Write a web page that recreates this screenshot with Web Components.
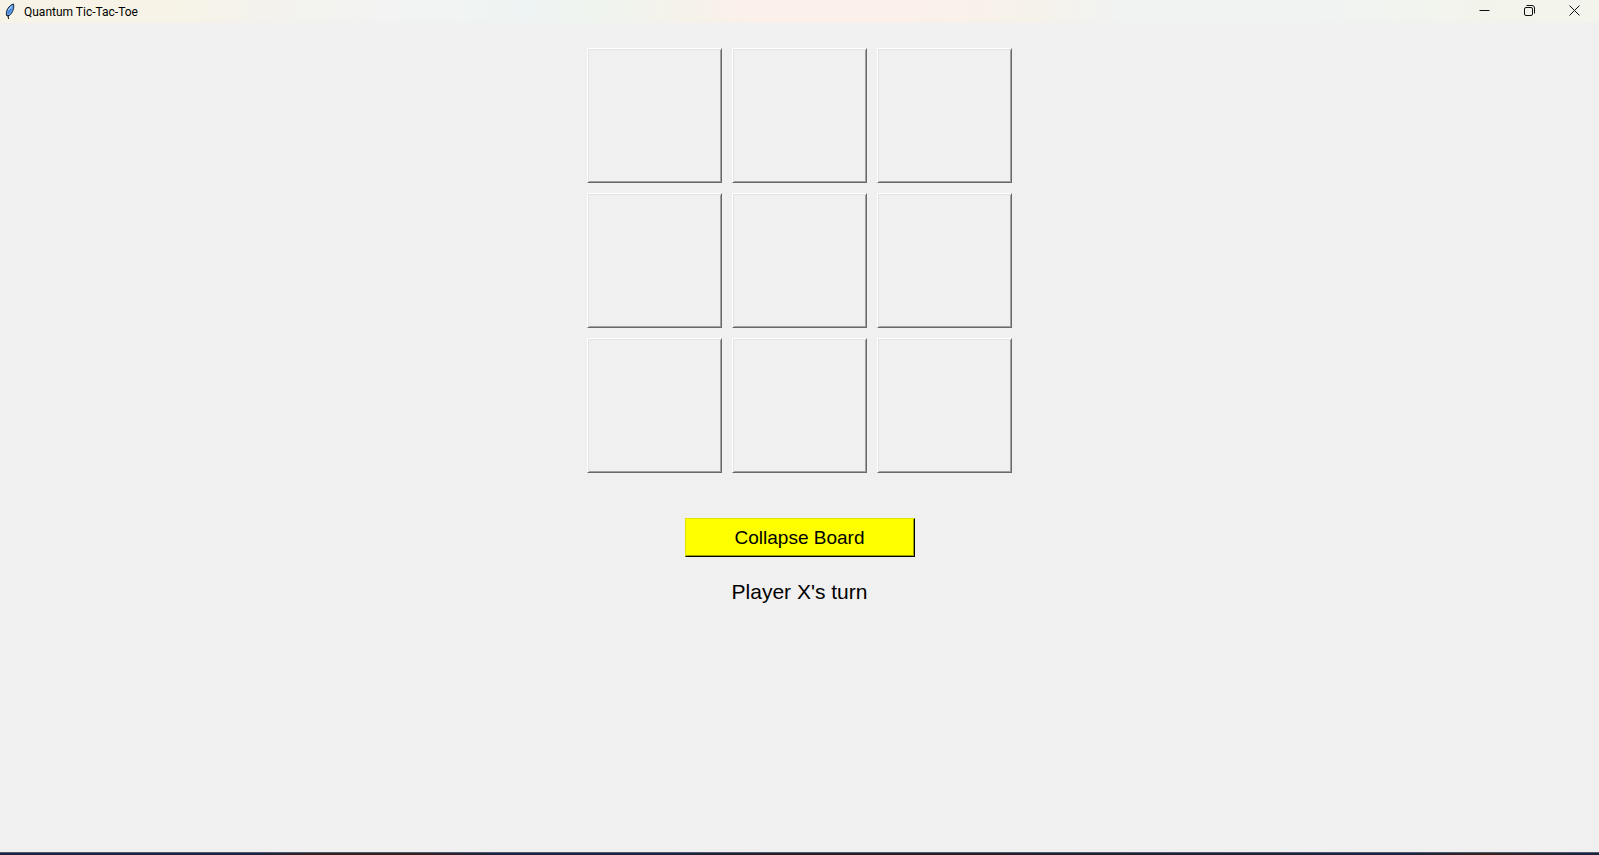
<!DOCTYPE html>
<html lang="en">
<head>
<meta charset="utf-8">
<title>Quantum Tic-Tac-Toe</title>
<style>
html, body { height: 100%; margin: 0; }
body { background: #f0f0f0; color: #000; font-family: "Liberation Sans", Arial, sans-serif; }
</style>
</head>
<body>
<app-window></app-window>
<template id="title-bar">
<style>
:host { display: flex; align-items: center; height: 23px; padding: 0 2px 0 5px;
  background: linear-gradient(90deg, #f7f3e6 0, #f7f3e6 10%, #f3f2ed 17%, #f2f3f2 24%, #eef4f3 33%, #eff4ef 37%, #f5f2ea 43%, #fbf0ea 47%, #fbf0ea 57%, #f5f2ea 65%, #f1f3f2 70%, #f0f3f2 82%, #f2f4ec 92%, #f3f4ec 100%); }
h1 { flex: 1; margin: 0 0 0 9px; font: 400 12px/22px Roboto, "Noto Sans", sans-serif; }
.window-buttons { display: flex; align-self: stretch; }
button { display: flex; width: 45px; height: 21px; padding: 0; border: 0; background: none; align-items: center; justify-content: center; }
svg { display: block; fill: none; stroke: #111; }
</style>
<svg width="10" height="17" viewBox="0 0 10 17" aria-hidden="true">
  <path d="M1.500 12C.5 8 4 2 8.500 1C9.500 5 7.500 10 4.500 12.500L2 13Z" fill="#5ca0ef" stroke="#18202c"/>
  <path d="M3 12L3.500 16" stroke="#111"/><path d="M3 10.500L6 6" stroke="#2b5a9c" stroke-width=".7"/><path d="M3.500 7L6.500 3.500" stroke="#b8dcff"/>
</svg>
<h1><slot></slot></h1>
<div class="window-buttons">
  <button type="button" aria-label="Minimize"><svg width="11" height="11"><path d="M.5 5.500h10"/></svg></button>
  <button type="button" aria-label="Restore"><svg width="11" height="11"><rect x=".5" y="2.500" width="8" height="8" rx="1.500"/><path d="M2.500 .5h5.500a2.500 2.500 0 0 1 2.500 2.500v5.500"/></svg></button>
  <button type="button" aria-label="Close"><svg width="11" height="11"><path d="M.5 .5l10 10M10.500 .5l-10 10"/></svg></button>
</div>
</template>
<template id="game-board">
<style>
:host { display: grid; grid-template-columns: repeat(3, 135px); gap: 10px; }
button { height: 135px; padding: 0; border: 1px solid; border-color: #fff #696969 #696969 #fff; border-radius: 0; background: #f0f0f0; box-shadow: inset 1px 1px #e3e3e3, inset -1px -1px #a0a0a0; }
</style>
</template>
<template id="collapse-button">
<style>
:host { display: block; }
button { display: block; width: 230px; height: 39px; padding: 0; border: 1px solid; border-color: #e3e300 #000 #000 #e3e300; border-radius: 0; background: #ff0; color: #000; font: 19px/36px "Liberation Sans", Arial, sans-serif; box-shadow: inset -1px -1px #a0a000; }
</style>
<button type="button"><slot></slot></button>
</template>
<template id="game-status">
<style>
:host { display: block; }
p { margin: 0; font-size: 21px; line-height: 30px; }
</style>
<p role="status"><slot></slot></p>
</template>
<template id="app-window">
<style>
:host { display: flex; flex-direction: column; min-height: 100vh; }
main { flex: 1; display: flex; flex-direction: column; align-items: center; padding-top: 25px; }
collapse-button { margin-top: 45px; }
game-status { margin-top: 20px; }
footer { height: 3px; background: linear-gradient(#555b6c 0 1px, transparent 1px), linear-gradient(90deg, #1c2140 0, #1c2140 16%, #33201c 20%, #33201c 26%, #1c2140 31%, #1c2140 42%, #241e28 48%, #241e28 62%, #1c2140 86%, #1c2140 88%, #33241c 93%, #1c2140 99%); }
</style>
<title-bar>Quantum Tic-Tac-Toe</title-bar>
<main>
  <game-board></game-board>
  <collapse-button>Collapse Board</collapse-button>
  <game-status>Player X's turn</game-status>
</main>
<footer></footer>
</template>
<script>
class TemplateElement extends HTMLElement {
  constructor() {
    super();
    this.attachShadow({ mode: "open" }).append(
      document.getElementById(this.localName).content.cloneNode(true));
  }
}
customElements.define("title-bar", class extends TemplateElement {});
customElements.define("game-board", class extends TemplateElement {
  constructor() {
    super();
    for (let i = 0; i < 9; i++) {
      const cell = document.createElement("button");
      cell.type = "button";
      cell.setAttribute("aria-label", `Row ${Math.floor(i / 3) + 1}, column ${i % 3 + 1}`);
      this.shadowRoot.append(cell);
    }
  }
});
customElements.define("collapse-button", class extends TemplateElement {});
customElements.define("game-status", class extends TemplateElement {});
customElements.define("app-window", class extends TemplateElement {});
</script>
</body>
</html>
